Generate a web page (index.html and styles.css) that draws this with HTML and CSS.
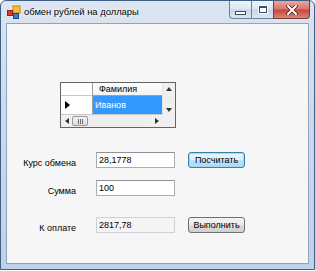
FILE: index.html
```html
<!DOCTYPE html>
<html lang="ru">
<head>
  <meta charset="UTF-8">
  <title>обмен рублей на доллары</title>
  <link rel="stylesheet" href="styles.css">
</head>
<body>
  <div class="window">
    <div class="titlebar">
      <svg class="app-icon" width="14" height="14" viewBox="0 0 14 14">
        <rect x="6" y="1" width="7" height="7" fill="#f2c230" stroke="#c08a10" stroke-width="1"/>
        <rect x="0.5" y="5.5" width="5" height="5" fill="#e03a2a" stroke="#9a1e14" stroke-width="1"/>
        <rect x="6.5" y="8.5" width="5" height="5" fill="#3a78d6" stroke="#1c4b96" stroke-width="1"/>
      </svg>
      <span class="title">обмен рублей на доллары</span>
      <div class="caption-buttons">
        <div class="cap cap-min"><span class="glyph-min"></span></div>
        <div class="cap cap-max"><span class="glyph-max"></span></div>
        <div class="cap cap-close">
          <svg width="12" height="10" viewBox="0 0 12 10">
            <path d="M2 1 L10 9 M10 1 L2 9" stroke="#4a1a18" stroke-width="3.4" stroke-linecap="square"/>
            <path d="M2 1 L10 9 M10 1 L2 9" stroke="#ffffff" stroke-width="2" stroke-linecap="square"/>
          </svg>
        </div>
      </div>
    </div>

    <div class="client">
      <div class="grid">
        <div class="grid-top">
          <div class="grid-cells">
            <div class="grid-row head-row">
              <div class="rowhead"></div>
              <div class="cell colhead">Фамилия</div>
            </div>
            <div class="grid-row data-row">
              <div class="rowhead">
                <svg width="5" height="8" viewBox="0 0 5 8"><path d="M0 0 L5 4 L0 8 Z" fill="#000"/></svg>
              </div>
              <div class="cell selected">Иванов</div>
            </div>
          </div>
          <div class="vscroll">
            <div class="sbtn"><svg width="6" height="4" viewBox="0 0 6 4"><path d="M0 4 L3 0 L6 4 Z" fill="#333"/></svg></div>
            <div class="strack"></div>
            <div class="sbtn"><svg width="6" height="4" viewBox="0 0 6 4"><path d="M0 0 L3 4 L6 0 Z" fill="#333"/></svg></div>
          </div>
        </div>
        <div class="grid-bottom">
          <div class="hscroll">
            <div class="sbtn"><svg width="4" height="6" viewBox="0 0 4 6"><path d="M4 0 L0 3 L4 6 Z" fill="#333"/></svg></div>
            <div class="thumb"><span></span><span></span><span></span></div>
            <div class="strack"></div>
            <div class="sbtn"><svg width="4" height="6" viewBox="0 0 4 6"><path d="M0 0 L4 3 L0 6 Z" fill="#333"/></svg></div>
          </div>
          <div class="corner"></div>
        </div>
      </div>

      <div class="form">
        <div class="form-row row-rate">
          <label class="lbl">Курс обмена</label>
          <div class="textbox">28,1778</div>
          <button class="btn btn-default">Посчитать</button>
        </div>
        <div class="form-row row-sum">
          <label class="lbl">Сумма</label>
          <div class="textbox">100</div>
        </div>
        <div class="form-row row-pay">
          <label class="lbl">К оплате</label>
          <div class="textbox readonly">2817,78</div>
          <button class="btn">Выполнить</button>
        </div>
      </div>
    </div>
  </div>
</body>
</html>
```

FILE: styles.css
```css
body { margin: 0; background: #ffffff; font-family: "Liberation Sans", Arial, sans-serif; }

.window { width: 313px; height: 268px; border: 1px solid #3f5f86; border-radius: 6px 6px 0 0;
  background: linear-gradient(180deg, #dce5f0 0%, #cddbec 40%, #bfd2e9 100%); display: flex; flex-direction: column; }

/* title bar */
.titlebar { height: 22px; display: flex; align-items: center; }
.app-icon { margin-left: 6px; margin-top: -1px; }
.title { margin-left: 3px; font-size: 9.4px; color: #000; margin-top: -2px; text-shadow: 0 0 4px #ffffff, 0 0 2px #ffffff; }
.caption-buttons { margin-left: auto; margin-right: 4px; align-self: flex-start; display: flex; height: 18px; }
.cap { height: 18px; border: 1px solid #6f819b; border-top: none; display: flex; align-items: center; justify-content: center; box-sizing: border-box; }
.cap-min { width: 22px; border-radius: 0 0 0 4px; border-right: none;
  background: linear-gradient(180deg, #eef3f9 0%, #dde7f3 48%, #c6d5e8 52%, #dbe6f3 100%); }
.cap-max { width: 22px; border-right: none;
  background: linear-gradient(180deg, #eef3f9 0%, #dde7f3 48%, #c6d5e8 52%, #dbe6f3 100%); }
.cap-close { width: 37px; border-radius: 0 0 4px 0; border-color: #7a3a36;
  background: linear-gradient(180deg, #e6aaa2 0%, #d9776b 45%, #c84a3e 55%, #d98477 100%); }
.glyph-min { width: 9px; height: 2px; border: 1px solid #3c4c62; background: #fff; margin-top: 6px; }
.glyph-max { width: 6px; height: 4px; border: 1px solid #3c4c62; border-top-width: 2px; background: #fff; box-shadow: 0 0 0 1px #ffffff; }

/* client area */
.client { margin: 0 5px; height: 239px; border: 1px solid #8da3bf; background: #f6f6f6; }

/* data grid */
.grid { width: 114px; height: 44px; border: 1px solid #646464; background: #fff; margin: 58px 0 0 53px; font-size: 9px; }
.grid-top { display: flex; height: 32px; }
.grid-cells { width: 101px; }
.grid-row { display: flex; }
.head-row { height: 13px; }
.data-row { height: 19px; }
.rowhead { width: 32px; border-right: 1px solid #a0a0a0; border-bottom: 1px solid #c8c8c8; display: flex; align-items: center; padding-left: 4px; box-sizing: border-box; }
.cell { flex: 1; box-sizing: border-box; display: flex; align-items: center; }
.colhead { padding-left: 6px; border-bottom: 1px solid #a0a0a0; background: linear-gradient(180deg, #ffffff, #f3f3f3); color: #000; }
.selected { background: #3399ff; color: #fff; padding-left: 2px; border-bottom: 1px solid #c8c8c8; }
.vscroll { width: 13px; display: flex; flex-direction: column; background: #f0f0f0; border-left: 1px solid #e2e2e2; box-sizing: border-box; }
.vscroll .sbtn { height: 11px; }
.strack { flex: 1; background: #eeeeee; }
.sbtn { display: flex; align-items: center; justify-content: center; background: #f0f0f0; }
.grid-bottom { display: flex; height: 12px; }
.hscroll { width: 101px; display: flex; background: #eeeeee; }
.hscroll .sbtn { width: 11px; }
.thumb { width: 16px; margin: 1px 0; border: 1px solid #989898; border-radius: 2px; box-sizing: border-box;
  background: linear-gradient(180deg, #f4f4f4, #dcdcdc); display: flex; justify-content: center; align-items: center; gap: 1px; }
.thumb span { width: 1px; height: 5px; background: #6d6d6d; }
.corner { flex: 1; background: #f0f0f0; }

/* form */
.form { margin-top: 24px; }
.form-row { display: flex; align-items: flex-start; height: 16px; }
.row-sum { margin-top: 12px; }
.row-pay { margin-top: 21px; }
.lbl { width: 69px; text-align: right; font-size: 9px; line-height: 16px; padding-top: 3px; color: #000; }
.textbox { width: 79px; height: 16px; box-sizing: border-box; margin-left: 20px; border: 1px solid #abadb3; border-top-color: #8e9299;
  background: #fff; font-size: 9px; line-height: 14px; padding-left: 2px; color: #000; }
.textbox.readonly { background: #f4f4f4; border-color: #cdd0d5; }
.btn { width: 57px; height: 16px; margin-left: 13px; padding: 0; font-family: "Liberation Sans", Arial, sans-serif; font-size: 9px;
  color: #000; border: 1px solid #707070; border-radius: 3px;
  background: linear-gradient(180deg, #f2f2f2 0%, #ebebeb 50%, #dddddd 51%, #cfcfcf 100%); }
.btn-default { border-color: #3c7fb1; box-shadow: inset 0 0 0 1px #a7d8f5;
  background: linear-gradient(180deg, #eaf6fd 0%, #d9f0fc 50%, #bee6fd 51%, #a7d9f5 100%); }
```
